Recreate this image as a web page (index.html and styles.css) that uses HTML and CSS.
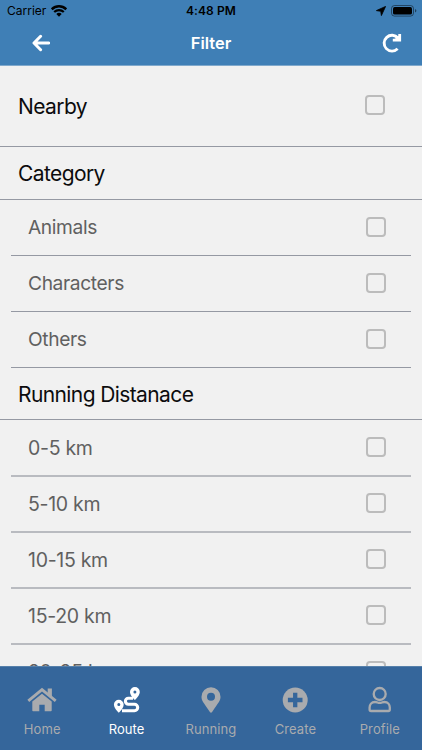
FILE: index.html
```html
<!DOCTYPE html>
<html lang="en">
<head>
<meta charset="utf-8">
<title>Filter</title>
<link rel="stylesheet" href="styles.css">
</head>
<body>
<div class="app">
  <header class="header">
    <div class="status">
      <div class="status-left">
        <span class="carrier">Carrier</span>
        <svg class="wifi" viewBox="0 0 16 12"><path d="M.7 4.3a10.5 10.5 0 0 1 14.6 0" fill="none" stroke="#000" stroke-width="2.5"/><path d="M3.2 7a6.9 6.9 0 0 1 9.6 0" fill="none" stroke="#000" stroke-width="2.2"/><path d="M5.3 8.9a4 4 0 0 1 5.4 0L8 11.7z"/></svg>
      </div>
      <span class="time">4:48 PM</span>
      <div class="status-right">
        <svg class="location" viewBox="0 0 10 10"><path d="M9.6.4 5.4 9.6 4.7 5.3.4 4.6z" stroke="#000" stroke-width=".8" stroke-linejoin="round"/></svg>
        <svg class="battery" viewBox="0 0 26 12"><rect x=".5" y=".5" width="22" height="10.6" rx="3" fill="none" stroke="#000" stroke-opacity=".45"/><rect x="2" y="2" width="19" height="7.6" rx="1.7"/><path d="M24 4q1.4.6 1.4 1.8T24 7.6z" opacity=".5"/></svg>
      </div>
    </div>
    <div class="nav">
      <svg class="back" viewBox="0 0 18 18"><path d="M8.6 2.300 2 9l6.6 6.700M2.5 9h14.3" fill="none" stroke="#fff" stroke-width="3" stroke-linecap="round" stroke-linejoin="round"/></svg>
      <h1>Filter</h1>
      <svg class="reload" viewBox="0 0 20 20"><path d="M15.6 15.8A7.900 7.900 0 1 1 16 5" fill="none" stroke="#fff" stroke-width="2.9"/><path d="M17.7.9v6.3h-6.9" fill="none" stroke="#fff" stroke-width="2.8"/><path d="m12.500 5.200 5-3v5z" fill="#fff"/></svg>
    </div>
  </header>
  <main class="list">
    <div class="section nearby"><span class="title">Nearby</span><span class="check"></span></div>
    <div class="section"><span class="title">Category</span></div>
    <div class="group words">
      <div class="row"><span>Animals</span><span class="check"></span></div>
      <div class="row"><span>Characters</span><span class="check"></span></div>
      <div class="row"><span>Others</span><span class="check"></span></div>
    </div>
    <div class="section distance"><span class="title">Running Distanace</span></div>
    <div class="group soft">
      <div class="row"><span>0-5 km</span><span class="check"></span></div>
      <div class="row"><span>5-10 km</span><span class="check"></span></div>
      <div class="row"><span>10-15 km</span><span class="check"></span></div>
      <div class="row"><span>15-20 km</span><span class="check"></span></div>
      <div class="row"><span>20-25 km</span><span class="check"></span></div>
    </div>
  </main>
  <nav class="tabs">
    <div class="tab"><svg viewBox="0 0 30 28"><path d="M1.300 14.800 15 3.700l13.700 11.100" fill="none" stroke="currentColor" stroke-width="2.9"/><path d="M20.7 2.600h4.200v8.400l-4.200-3.600z" fill="currentColor"/><path d="M5.3 15.600 15 7.700l9.700 7.900v8.900q0 .8-.8.8h-6.2v-6.6h-5.4v6.6H6.100q-.8 0-.8-.8z" fill="currentColor"/></svg><span>Home</span></div>
    <div class="tab active"><svg viewBox="0 0 30 28"><path d="M21 12.300h-4.600a3 3 0 0 0 0 6H22.500a3.200 3.200 0 0 1 0 6.400H10" fill="none" stroke="currentColor" stroke-width="3.100"/><path fill="currentColor" fill-rule="evenodd" d="M22.900 1a4.900 4.900 0 0 0-4.900 4.900c0 2.600 2.700 6 4.900 8.100 2.200-2.100 4.900-5.500 4.900-8.100A4.900 4.900 0 0 0 22.900 1m0 3.400a1.500 1.500 0 1 1 0 3 1.500 1.500 0 0 1 0-3M6.800 13.800a4.900 4.900 0 0 0-4.900 4.900c0 2.600 2.700 5.800 4.900 8 2.200-2.200 4.900-5.400 4.900-8a4.900 4.900 0 0 0-4.900-4.900m0 3.300a1.500 1.500 0 1 1 0 3 1.500 1.500 0 0 1 0-3"/></svg><span>Route</span></div>
    <div class="tab"><svg viewBox="0 0 30 28"><path fill="currentColor" fill-rule="evenodd" d="M15 1.300a9.500 9.500 0 0 0-9.500 9.500c0 3.800 1.300 4.900 8.400 15.200q1.100 1.400 2.200 0c7.100-10.300 8.400-11.400 8.400-15.200A9.500 9.500 0 0 0 15 1.300m0 5.500a4 4 0 1 1 0 8 4 4 0 0 1 0-8"/></svg><span>Running</span></div>
    <div class="tab"><svg viewBox="0 0 30 28"><circle cx="15.200" cy="14" r="12.500" fill="currentColor"/><path d="M15.200 6.700v14.600M7.900 14h14.600" stroke="#35669b" stroke-width="4.300"/></svg><span>Create</span></div>
    <div class="tab"><svg viewBox="0 0 30 28"><g fill="none" stroke="currentColor" stroke-width="2.300"><circle cx="14.700" cy="8" r="6"/><path d="M10 16c2.500 0 2.500.9 4.700.9s2.200-.9 4.700-.9c3.600 0 5.400 2.600 5.400 5.500v2q0 1.500-1.500 1.500H6.100q-1.500 0-1.500-1.500v-2c0-2.900 1.800-5.500 5.400-5.500z"/></g></svg><span>Profile</span></div>
  </nav>
</div>
</body>
</html>
```
FILE: styles.css
```css
* { box-sizing: border-box; }
body {
  margin: 0;
  font-family: Inter, sans-serif;
  background: #f1f1f1;
}
.app {
  width: 422px;
  height: 750px;
  display: flex;
  flex-direction: column;
  overflow: hidden;
}
svg { display: block; flex: none; }
.header {
  height: 66px;
  flex: none;
  background: #3f7fb6;
  border-bottom: 1px solid #80a9cc;
}
.status {
  height: 22px;
  display: grid;
  grid-template-columns: 1fr auto 1fr;
  align-items: center;
  line-height: 22px;
  color: #000;
}
.status-left { display: flex; align-items: center; gap: 5px; padding-left: 7px; }
.carrier { font-size: 12px; }
.wifi { width: 16px; height: 12px; }
.time { font-weight: 600; font-size: 12px; letter-spacing: 0.100px; }
.status-right { display: flex; align-items: center; justify-content: flex-end; gap: 5px; padding-right: 5px; }
.location { width: 10px; height: 10px; }
.battery { width: 26px; height: 12px; }
.nav {
  height: 42px;
  display: grid;
  grid-template-columns: 1fr auto 1fr;
  align-items: center;
  padding: 0 20px 0 32px;
}
.back { width: 18px; height: 18px; }
.nav h1 {
  margin: 0 0 0 -12px;
  font-size: 16.500px;
  line-height: 20px;
  font-weight: 600;
  color: #fff;
}
.reload { width: 20px; height: 20px; justify-self: end; }
.list { flex: 1; min-height: 0; overflow: hidden; }
.section {
  height: 53px;
  display: flex;
  align-items: center;
  justify-content: space-between;
  padding: 0 37px 0 18px;
  border-bottom: 1px solid #9599a3;
}
.title { font-size: 21px; line-height: 26px; letter-spacing: -0.600px; color: #0c0c0d; padding-top: 2px; }
.nearby { height: 81px; padding-bottom: 2px; }
.nearby .title { padding-top: 4px; }
.distance { height: 52px; }
.group { padding: 0 11px; }
.row {
  height: 56px;
  display: flex;
  align-items: center;
  justify-content: space-between;
  padding: 0 25px 0 17px;
  border-bottom: 1px solid #9599a3;
  font-size: 19.500px;
  letter-spacing: -0.300px;
  color: #606060;
}
.words .row {
  padding-bottom: 2px;
  font-size: 19.200px;
  letter-spacing: -0.380px;
}
.soft { padding-top: 1px; }
.soft .row { border-bottom: 2px solid #b9bbc0; }
.check {
  width: 20px;
  height: 20px;
  border: 2px solid #bcbcbc;
  border-radius: 4px;
}
.soft .check { margin-bottom: 2px; }
.tabs {
  height: 84px;
  flex: none;
  display: grid;
  grid-template-columns: repeat(5, 1fr);
  background: #35669b;
  border-top: 1px solid #5680aa;
}
.tab {
  display: flex;
  flex-direction: column;
  align-items: center;
  padding-top: 19px;
  color: #a9abae;
  font-size: 13px;
  line-height: 18px;
  letter-spacing: 0.100px;
}
.tab svg { width: 30px; height: 28px; margin-bottom: 6px; }
.tab.active { color: #fff; }
```
